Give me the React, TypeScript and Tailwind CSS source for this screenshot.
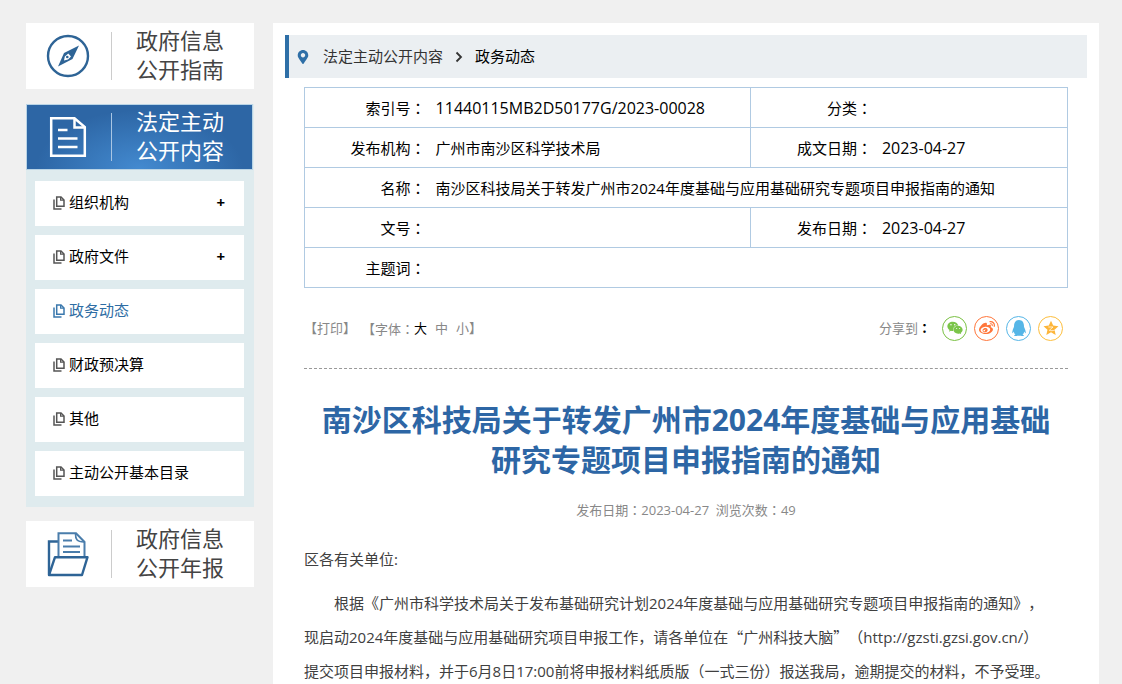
import type { ReactNode } from "react";
import { FaMapMarkerAlt, FaQq, FaWeibo, FaWeixin } from "react-icons/fa";

const MENU = [
  { label: "组织机构", expandable: true },
  { label: "政府文件", expandable: true },
  { label: "政务动态", active: true },
  { label: "财政预决算" },
  { label: "其他" },
  { label: "主动公开基本目录" },
];

function CompassIcon() {
  return (
    <svg width="44" height="44" viewBox="0 0 44 44" fill="none">
      <circle cx="22" cy="22" r="20" stroke="#2e6496" strokeWidth="2.4" />
      <path
        fillRule="evenodd"
        fill="#2e6496"
        d="M33 11.500 26.500 25 12 32.500 18 19ZM22.300 19.600 18.800 22.600 18 26.500 22 25.500 25 22.400Z"
      />
      <circle cx="21.300" cy="23" r="1.300" fill="#2e6496" />
    </svg>
  );
}

function DocumentIcon() {
  return (
    <svg width="44" height="44" viewBox="0 0 44 44" fill="none" stroke="#fff" strokeWidth="2.500">
      <path d="M5.200 3.200H28.500L38.800 12V40.800H5.200Z" />
      <path d="M28.500 3.500V12.500H38.500" />
      <path d="M12 15H21.500M12 23.500H31.500M12 32H31.500" />
    </svg>
  );
}

function FolderIcon() {
  return (
    <svg width="44" height="48" viewBox="0 0 44 48" fill="none" stroke="#2e6496" strokeWidth="2.400">
      <path d="M12 11.500H3V44.500" />
      <path d="M12.500 26V3.200H30L38.500 12V26" stroke="#4a7dab" strokeWidth="2" />
      <path d="M29.500 3.500C29.500 9 30.500 12 38 12" strokeWidth="1.700" stroke="#4a7dab" />
      <path d="M17 10.500H26M17 16.500H34M17 22H34" strokeWidth="1.800" stroke="#4a7dab" />
      <path d="M9 27.200H41.500L36 45H3Z" strokeLinejoin="round" />
    </svg>
  );
}

function PagesIcon() {
  return (
    <svg width="12" height="14" viewBox="0 0 12 14" fill="none" stroke="currentColor" strokeWidth="1.500">
      <path d="M3.700 1H8L11 4V10.300H3.700Z" />
      <path d="M7.600 1V4.200H11" strokeWidth="1.200" />
      <path d="M1 3.500V13H8.500" />
    </svg>
  );
}

function StarIcon() {
  return (
    <svg width="16" height="16" viewBox="0 0 24 24">
      <path
        fill="#fdb539"
        d="M12 1l3.300 7.300 7.900.9-5.900 5.400 1.700 7.900L12 18.500 5 22.500l1.700-7.900L.8 9.200l7.900-.9z"
      />
      <path d="M8 10.500H15L9.500 15.500C12 16.300 15 16.200 17.500 15.300" fill="none" stroke="#fff" strokeWidth="1.100" />
    </svg>
  );
}

function SideCard({ icon, lines, active }: { icon: ReactNode; lines: [string, string]; active?: boolean }) {
  return (
    <a
      href="#"
      className={
        active
          ? "mr-px flex h-[66px] items-center border border-[#b9d4e6] bg-[#2d66a5] bg-[radial-gradient(ellipse_at_bottom,#438ad0_0%,#2d66a5_65%)] text-white"
          : "flex h-[66px] items-center border border-white bg-white text-[#444]"
      }
    >
      <span className="flex w-[84px] justify-center pr-[2px]">{icon}</span>
      <span className={active ? "h-12 w-px bg-[#a9c6e4]" : "h-12 w-px bg-[#ccc]"} />
      <span className="pb-[2px] pl-6 text-[22px] leading-[29px]">
        {lines[0]}
        <br />
        {lines[1]}
      </span>
    </a>
  );
}

function ShareButton({ label, className, children }: { label: string; className: string; children: ReactNode }) {
  return (
    <button
      type="button"
      aria-label={label}
      className={`flex size-[25px] items-center justify-center rounded-full border ${className}`}
    >
      {children}
    </button>
  );
}

// full-width colon centred in its box
function Colon() {
  return <span className="font-['Noto_Sans_CJK_TC',sans-serif]">：</span>;
}

function Label({ children }: { children: ReactNode }) {
  return (
    <th className="h-10 border-y border-l border-[#b0cae2] pt-px pr-px text-right font-normal">
      {children}
      <Colon />
    </th>
  );
}

function Value({ children, span, numeric }: { children?: ReactNode; span?: number; numeric?: boolean }) {
  return (
    <td
      colSpan={span}
      className={
        numeric
          ? "h-10 border-y border-r border-[#b0cae2] pt-px pl-[9px] text-base"
          : "h-10 border-y border-r border-[#b0cae2] pt-px pl-[9px]"
      }
    >
      {children}
    </td>
  );
}

export default function App() {
  return (
    <div className="flex min-h-screen items-stretch gap-[19px] bg-[#f0f0f0] pt-[23px] pr-[23px] pl-[26px] font-['Open_Sans','Noto_Sans_CJK_SC',sans-serif] text-[15px] text-black [text-spacing-trim:space-all]">
      <aside className="w-[228px] shrink-0">
        <SideCard icon={<CompassIcon />} lines={["政府信息", "公开指南"]} />

        <div className="mt-[15px] mb-[14px] bg-[#dfebee]">
          <SideCard icon={<DocumentIcon />} lines={["法定主动", "公开内容"]} active />
          <nav className="flex flex-col gap-[9px] pt-[11px] pr-[10px] pb-[11px] pl-[9px]">
            {MENU.map((item) => (
              <a
                key={item.label}
                href="#"
                className={
                  item.active
                    ? "flex h-[45px] items-center bg-white pr-[19px] pb-[2px] pl-[18px] text-[#2e6da4]"
                    : "flex h-[45px] items-center bg-white pr-[19px] pb-[2px] pl-[18px]"
                }
              >
                <span className={item.active ? "text-[#3a78ad]" : "text-[#555]"}>
                  <PagesIcon />
                </span>
                <span className="flex-1 pl-1">{item.label}</span>
                {item.expandable && <span className="font-bold">+</span>}
              </a>
            ))}
          </nav>
        </div>

        <SideCard icon={<FolderIcon />} lines={["政府信息", "公开年报"]} />
      </aside>

      <main className="min-w-0 flex-1 bg-white px-3 pt-3">
        <nav className="flex h-[43px] items-center border-l-4 border-[#2e6fa7] bg-[#ebeff2] pl-[7px]">
          <FaMapMarkerAlt size={14} className="text-[#2e6fa7]" />
          <a href="#" className="ml-[13px] text-[#333]">法定主动公开内容</a>
          <svg width="8" height="12" viewBox="0 0 8 12" fill="none" stroke="#333" strokeWidth="1.800" className="mx-3">
            <path d="M1.500 1.500 6 6 1.500 10.500" />
          </svg>
          <a href="#">政务动态</a>
        </nav>

        <div className="px-[19px] pt-[9px]">
          <table className="w-full table-fixed border-collapse">
            <colgroup>
              <col className="w-[16%]" />
              <col className="w-[42.5%]" />
              <col className="w-[16%]" />
              <col />
            </colgroup>
            <tbody>
              <tr>
                <Label>索引号</Label>
                <Value numeric>11440115MB2D50177G/2023-00028</Value>
                <Label>分类</Label>
                <Value />
              </tr>
              <tr>
                <Label>发布机构</Label>
                <Value>广州市南沙区科学技术局</Value>
                <Label>成文日期</Label>
                <Value numeric>2023-04-27</Value>
              </tr>
              <tr>
                <Label>名称</Label>
                <Value span={3}>南沙区科技局关于转发广州市2024年度基础与应用基础研究专题项目申报指南的通知</Value>
              </tr>
              <tr>
                <Label>文号</Label>
                <Value />
                <Label>发布日期</Label>
                <Value numeric>2023-04-27</Value>
              </tr>
              <tr>
                <Label>主题词</Label>
                <Value span={3} />
              </tr>
            </tbody>
          </table>

          <div className="flex h-[81px] items-center justify-between border-b border-dashed border-[#999] text-[13px] text-[#888]">
            <div className="flex pt-[2px]">
              <button type="button">【打印】</button>
              <span className="ml-[6px]">【字体<Colon /></span>
              <button type="button" className="text-black">大</button>
              <button type="button" className="ml-2">中</button>
              <button type="button" className="ml-2">小</button>
              <span>】</span>
            </div>
            <div className="flex items-center gap-[7px] pr-[5px]">
              <span className="pr-1">
                分享到<span className="font-bold text-black"><Colon /></span>
              </span>
              <ShareButton label="微信" className="border-[#7ac143] text-[#7bc549]">
                <FaWeixin size={16} />
              </ShareButton>
              <ShareButton label="微博" className="border-[#ff763b] text-[#ff763b]">
                <FaWeibo size={16} />
              </ShareButton>
              <ShareButton label="QQ" className="border-[#56b6e7] text-[#56b6e7]">
                <FaQq size={16} />
              </ShareButton>
              <ShareButton label="QQ空间" className="border-[#fdbe3d]">
                <StarIcon />
              </ShareButton>
            </div>
          </div>

          <h1 className="px-3 pt-[31px] text-center text-[30px] leading-10 font-bold text-[#2d66a5]">
            南沙区科技局关于转发广州市2024年度基础与应用基础研究专题项目申报指南的通知
          </h1>
          <p className="pt-5 text-center text-[13px] leading-5 text-[#888]">
            发布日期<Colon />2023-04-27&nbsp; 浏览次数<Colon />49
          </p>

          <article className="pt-[22px] pr-4 leading-[34px] text-[#404040]">
            <p>区各有关单位:</p>
            <p className="mt-[10px] indent-[30px]">
              根据《广州市科学技术局关于发布基础研究计划2024年度基础与应用基础研究专题项目申报指南的通知》，现启动2024年度基础与应用基础研究项目申报工作，请各单位在<span className="font-['Noto_Sans_CJK_SC',sans-serif]">“广州科技大脑”</span>（http://gzsti.gzsi.gov.cn/）提交项目申报材料，并于6月8日17:00前将申报材料纸质版（一式三份）报送我局，逾期提交的材料，不予受理。
            </p>
          </article>
        </div>
      </main>
    </div>
  );
}
